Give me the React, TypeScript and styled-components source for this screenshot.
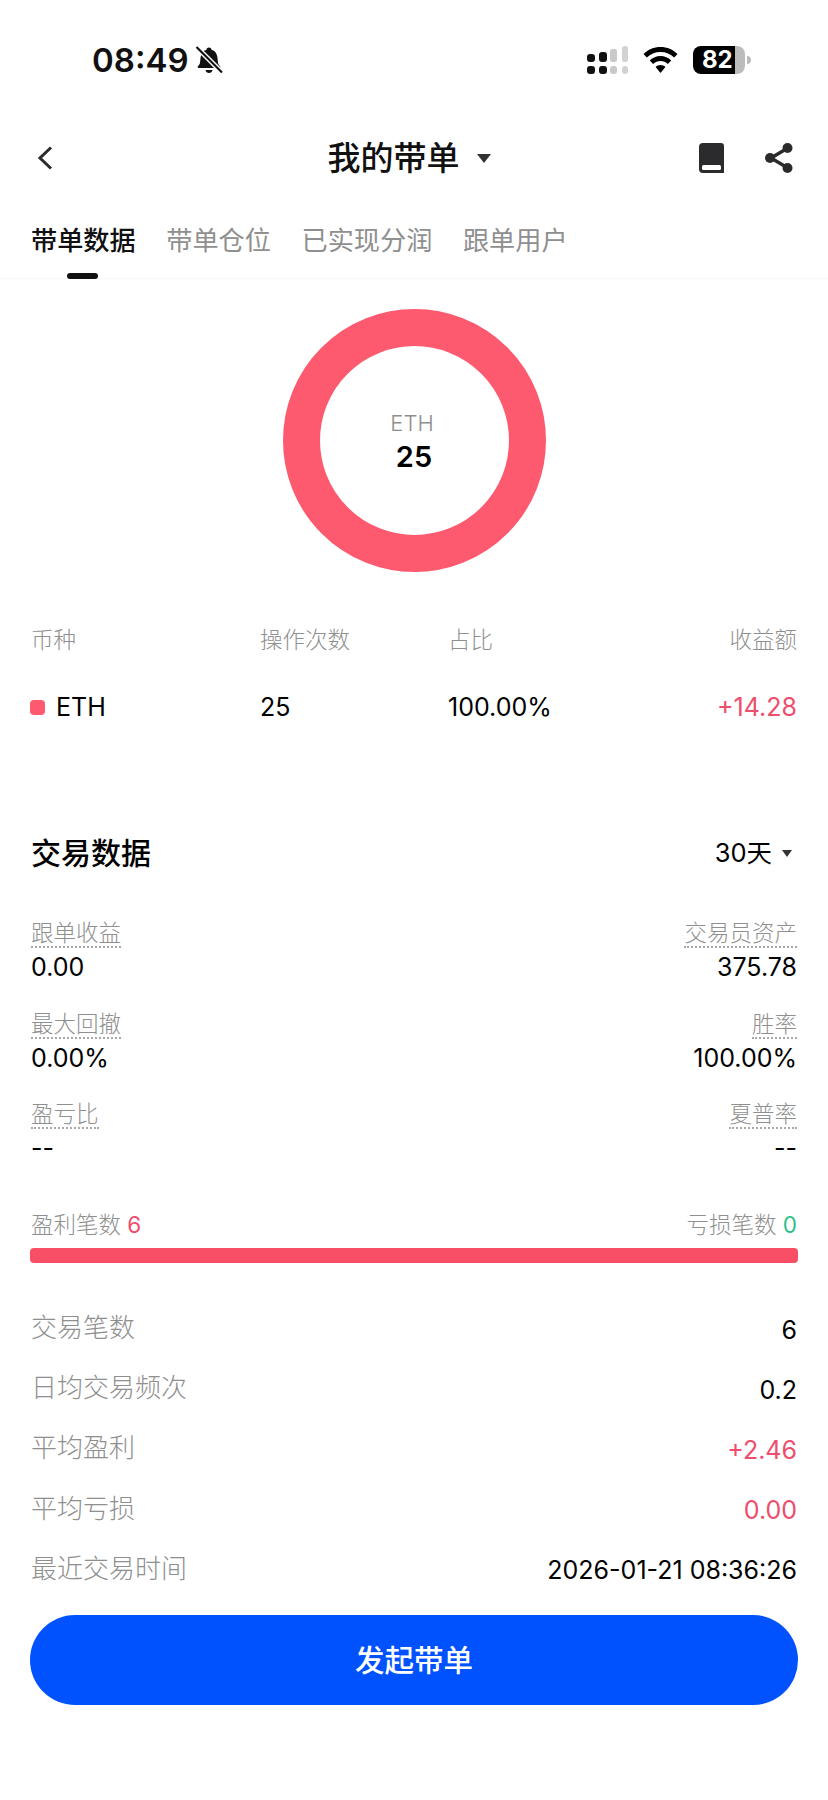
import React from 'react';
import styled, { createGlobalStyle } from 'styled-components';

// -- external datas --
const holdings = { symbol: 'ETH', count: '25', share: '100.00%', income: '+14.28' };

const metrics = [
  { label: '跟单收益', value: '0.00', right: false },
  { label: '交易员资产', value: '375.78', right: true },
  { label: '最大回撤', value: '0.00%', right: false },
  { label: '胜率', value: '100.00%', right: true },
  { label: '盈亏比', value: '--', right: false },
  { label: '夏普率', value: '--', right: true },
];

const details: { label: string; value: string; red?: boolean }[] = [
  { label: '交易笔数', value: '6' },
  { label: '日均交易频次', value: '0.2' },
  { label: '平均盈利', value: '+2.46', red: true },
  { label: '平均亏损', value: '0.00', red: true },
  { label: '最近交易时间', value: '2026-01-21 08:36:26' },
];

const tabs = ['带单数据', '带单仓位', '已实现分润', '跟单用户'];

// -- icons --
const BellOffIcon: React.FC = () => (
  <svg width="28" height="28" viewBox="0 0 28 28">
    <path d="M14 1.5c1.4 0 2.3.9 2.5 2.2 3.6 1 5.5 4 5.9 7.6l.6 5.4c.2 1.4 1 2.4 2 3.4.8.9.3 2-.9 2H3.900c-1.200 0-1.700-1.100-.9-2 1-1 1.800-2 2-3.400l.6-5.400c.4-3.600 2.300-6.600 5.900-7.600.2-1.300 1.100-2.200 2.500-2.200z" fill="#111" />
    <path d="M10.500 24h7c-.3 1.800-1.700 3-3.500 3s-3.200-1.200-3.500-3z" fill="#111" />
    <path d="M2 1.500 26.500 26" stroke="#fff" strokeWidth="5" />
    <path d="M1.500 1 27 26.500" stroke="#111" strokeWidth="2.200" />
  </svg>
);

const SignalIcon: React.FC = () => (
  <svg width="41" height="28" viewBox="0 0 41 28">
    <rect x="0" y="8" width="8" height="8" rx="3" fill="#111" />
    <rect x="12" y="6" width="8" height="10" rx="3" fill="#111" />
    <rect x="23" y="3" width="7" height="13" rx="2.500" fill="#c9c9c9" />
    <rect x="35" y="0" width="6" height="16" rx="2.500" fill="#d2d2d2" />
    <rect x="0" y="20" width="8" height="8" rx="3" fill="#111" />
    <rect x="12" y="20" width="8" height="8" rx="3" fill="#111" />
    <rect x="23" y="20" width="7" height="8" rx="3" fill="#c9c9c9" />
    <rect x="35" y="20" width="6" height="8" rx="3" fill="#d2d2d2" />
  </svg>
);

const WifiIcon: React.FC = () => (
  <svg width="35" height="26" viewBox="0 0 35 26">
    <path d="M17.500 0C24 0 30 2.600 34.500 7l-3.300 3.500C27.600 7 22.800 5 17.500 5S7.400 7 3.800 10.500L.5 7C5 2.600 11 0 17.500 0z" fill="#000" />
    <path d="M17.500 9c4.100 0 7.900 1.600 10.700 4.400l-3.300 3.500c-2-1.900-4.600-3-7.400-3s-5.400 1.100-7.400 3l-3.300-3.500C9.600 10.600 13.400 9 17.500 9z" fill="#000" />
    <path d="M17.500 18c1.900 0 3.600.7 4.900 1.900L17.500 26l-4.900-6.100c1.300-1.200 3-1.900 4.900-1.900z" fill="#000" />
  </svg>
);

const BookIcon: React.FC = () => (
  <svg width="25" height="30" viewBox="0 0 25 30">
    <path d="M4 0h18a3 3 0 0 1 3 3v27H4a4 4 0 0 1-4-4V4a4 4 0 0 1 4-4z" fill="#2b2b2d" />
    <rect x="3" y="22" width="19" height="5" rx="1.500" fill="#fff" />
  </svg>
);

const ShareIcon: React.FC = () => (
  <svg width="28" height="30" viewBox="0 0 28 30">
    <path d="M6 15 22 5.500M6 15l16 9.500" stroke="#2b2b2d" strokeWidth="3.400" fill="none" />
    <circle cx="22.500" cy="5" r="5" fill="#2b2b2d" />
    <circle cx="5" cy="15" r="5" fill="#2b2b2d" />
    <circle cx="22.500" cy="25" r="5" fill="#2b2b2d" />
  </svg>
);

const BackIcon: React.FC = () => (
  <svg width="16" height="24" viewBox="0 0 16 24">
    <path d="M14 1.500 3 12l11 10.500" stroke="#2b2b2d" strokeWidth="3" fill="none" />
  </svg>
);

// -- main component --
const App: React.FC = () => {
  // -- render part --
  return (
    <Page>
      <GlobalStyle />
      <StatusBar>
        <StatusTime>
          <Clock>08:49</Clock>
          <BellOffIcon />
        </StatusTime>
        <StatusIcons>
          <SignalIcon />
          <WifiIcon />
          <Battery>
            <BatteryBody>
              <BatteryLevel>82</BatteryLevel>
            </BatteryBody>
            <BatteryNub />
          </Battery>
        </StatusIcons>
      </StatusBar>

      <NavBar>
        <BackIcon />
        <NavTitle>
          我的带单
          <Caret $size={7.5} $color="#333" />
        </NavTitle>
        <NavActions>
          <BookIcon />
          <ShareIcon />
        </NavActions>
      </NavBar>

      <TabBar>
        {tabs.map((tab, i) => (
          <Tab key={tab} $active={i === 0}>
            {tab}
          </Tab>
        ))}
      </TabBar>

      <Content>
        <Donut>
          <DonutLabel>ETH</DonutLabel>
          <DonutValue>25</DonutValue>
        </Donut>

        <CoinHead>
          <HeadCell>币种</HeadCell>
          <HeadCell>操作次数</HeadCell>
          <HeadCell>占比</HeadCell>
          <HeadCell $right>收益额</HeadCell>
        </CoinHead>
        <CoinRow>
          <CoinCell>
            <CoinDot />
            {holdings.symbol}
          </CoinCell>
          <CoinCell>{holdings.count}</CoinCell>
          <CoinCell>{holdings.share}</CoinCell>
          <CoinCell $right $red>
            {holdings.income}
          </CoinCell>
        </CoinRow>

        <SectionHead>
          <SectionTitle>交易数据</SectionTitle>
          <RangePicker>
            30天
            <Caret $size={5.5} $color="#333" />
          </RangePicker>
        </SectionHead>

        <MetricGrid>
          {metrics.map((m) => (
            <Metric key={m.label} $right={m.right}>
              <MetricLabel>{m.label}</MetricLabel>
              <MetricValue>{m.value}</MetricValue>
            </Metric>
          ))}
        </MetricGrid>

        <CountRow>
          <span>
            盈利笔数 <CountRed>6</CountRed>
          </span>
          <span>
            亏损笔数 <CountGreen>0</CountGreen>
          </span>
        </CountRow>
        <RatioBar />

        <DetailList>
          {details.map((d) => (
            <DetailRow key={d.label}>
              <DetailLabel>{d.label}</DetailLabel>
              <DetailValue $red={d.red}>{d.value}</DetailValue>
            </DetailRow>
          ))}
        </DetailList>

        <PrimaryButton>发起带单</PrimaryButton>
      </Content>
    </Page>
  );
};

// -- styled components --
const GlobalStyle = createGlobalStyle`
  html, body {
    margin: 0;
    padding: 0;
    background: #fff;
  }
  * {
    box-sizing: border-box;
  }
`;

const Page = styled.div`
  width: 828px;
  height: 1800px;
  overflow: hidden;
  background: #fff;
  color: #000;
  font-family: Inter, 'Noto Sans CJK SC', sans-serif;
`;

const StatusBar = styled.div`
  height: 120px;
  padding: 0 77px 0 92px;
  display: flex;
  align-items: center;
  justify-content: space-between;
`;

const StatusTime = styled.div`
  display: flex;
  align-items: center;
  gap: 6px;
`;

const Clock = styled.span`
  font-size: 33px;
  font-weight: 600;
  line-height: 40px;
  color: #111;
`;

const StatusIcons = styled.div`
  display: flex;
  align-items: center;
  gap: 15px;
`;

const Battery = styled.div`
  display: flex;
  align-items: center;
  gap: 2px;
`;

const BatteryBody = styled.div`
  width: 52px;
  height: 28px;
  border-radius: 8px;
  background: linear-gradient(to right, #000 81%, #bcbcbc 81%);
  display: flex;
  align-items: center;
  padding-left: 9px;
`;

const BatteryLevel = styled.span`
  color: #fff;
  font-size: 24px;
  font-weight: 700;
  line-height: 28px;
`;

const BatteryNub = styled.div`
  width: 4px;
  height: 8px;
  border-radius: 0 4px 4px 0;
  background: #bcbcbc;
`;

const NavBar = styled.div`
  height: 76px;
  padding: 0 35px 0 37px;
  display: flex;
  align-items: center;
  justify-content: space-between;
`;

const NavTitle = styled.div`
  display: flex;
  align-items: center;
  gap: 17px;
  font-size: 33px;
  font-weight: 500;
  line-height: 44px;
  color: #111;
  margin-left: 66px;
`;

const Caret = styled.span<{ $size: number; $color: string }>`
  display: inline-block;
  width: 0;
  height: 0;
  border-left: ${(p) => p.$size}px solid transparent;
  border-right: ${(p) => p.$size}px solid transparent;
  border-top: ${(p) => p.$size + 2}px solid ${(p) => p.$color};
`;

const NavActions = styled.div`
  display: flex;
  align-items: center;
  gap: 41px;
`;

const TabBar = styled.div`
  height: 83px;
  padding: 0 31px;
  display: flex;
  gap: 30.5px;
  border-bottom: 1px solid #f6f6f6;
`;

const Tab = styled.div<{ $active: boolean }>`
  position: relative;
  height: 83px;
  padding-top: 27px;
  font-size: 26.2px;
  line-height: 36px;
  color: ${(p) => (p.$active ? '#111' : '#8f8f8f')};
  font-weight: ${(p) => (p.$active ? 500 : 400)};

  ${(p) =>
    p.$active &&
    `
    &::after {
      content: '';
      position: absolute;
      left: 36px;
      bottom: 0;
      width: 31px;
      height: 6px;
      border-radius: 3px;
      background: #111;
    }
  `}
`;

const Content = styled.div`
  padding: 0 31px;
`;

const Donut = styled.div`
  width: 263px;
  height: 263px;
  margin: 30px auto 0;
  border: 37.5px solid #fd5a70;
  border-radius: 50%;
  display: flex;
  flex-direction: column;
  align-items: center;
  justify-content: center;
`;

const DonutLabel = styled.div`
  font-size: 22px;
  font-weight: 300;
  line-height: 26px;
  color: #8e8e8e;
  margin: 4px 4px 0 0;
`;

const DonutValue = styled.div`
  font-size: 29px;
  font-weight: 600;
  line-height: 36px;
  margin-top: 3px;
  color: #000;
`;

const CoinHead = styled.div`
  margin-top: 53px;
  display: grid;
  grid-template-columns: 229px 188px 1fr 1fr;
`;

const HeadCell = styled.div<{ $right?: boolean }>`
  font-size: 22.5px;
  font-weight: 300;
  line-height: 30px;
  color: #8f8f8f;
  text-align: ${(p) => (p.$right ? 'right' : 'left')};
`;

const CoinRow = styled(CoinHead)`
  margin-top: 37px;
`;

const CoinCell = styled.div<{ $right?: boolean; $red?: boolean }>`
  display: flex;
  align-items: center;
  justify-content: ${(p) => (p.$right ? 'flex-end' : 'flex-start')};
  font-size: 25px;
  line-height: 30px;
  color: ${(p) => (p.$red ? '#ee4d6c' : '#000')};
`;

const CoinDot = styled.span`
  width: 15px;
  height: 15px;
  border-radius: 4px;
  background: #fd5a70;
  margin: 0 11px 0 -1px;
`;

const SectionHead = styled.div`
  margin-top: 111px;
  height: 40px;
  display: flex;
  align-items: center;
  justify-content: space-between;
`;

const SectionTitle = styled.div`
  font-size: 30px;
  font-weight: 500;
  line-height: 40px;
  color: #000;
`;

const RangePicker = styled.div`
  display: flex;
  align-items: center;
  gap: 10px;
  font-size: 25.5px;
  line-height: 36px;
  padding-right: 5px;
`;

const MetricGrid = styled.div`
  margin-top: 47px;
  display: grid;
  grid-template-columns: 1fr 1fr;
  row-gap: 28.5px;
`;

const Metric = styled.div<{ $right: boolean }>`
  display: flex;
  flex-direction: column;
  align-items: ${(p) => (p.$right ? 'flex-end' : 'flex-start')};
`;

const MetricLabel = styled.div`
  height: 28px;
  font-size: 22.5px;
  font-weight: 300;
  line-height: 26px;
  color: #8f8f8f;
  border-bottom: 2px dotted #a8a8a8;
`;

const MetricValue = styled.div`
  margin-top: 4px;
  font-size: 25px;
  line-height: 30px;
  color: #000;
`;

const CountRow = styled.div`
  margin-top: 47px;
  display: flex;
  justify-content: space-between;
  font-size: 22.5px;
  font-weight: 300;
  line-height: 30px;
  color: #8f8f8f;
`;

const CountRed = styled.span`
  color: #ee4d6c;
  font-weight: 400;
`;

const CountGreen = styled.span`
  color: #2fbf8a;
  font-weight: 400;
`;

const RatioBar = styled.div`
  margin: 8px -1px 0;
  height: 15px;
  border-radius: 4px;
  background: #f94f66;
`;

const DetailList = styled.div`
  margin-top: 35px;
`;

const DetailRow = styled.div`
  height: 60.2px;
  display: flex;
  align-items: center;
  justify-content: space-between;
`;

const DetailLabel = styled.div`
  font-size: 26px;
  font-weight: 300;
  line-height: 36px;
  color: #8f8f8f;
`;

const DetailValue = styled.div<{ $red?: boolean }>`
  padding-top: 3px;
  font-size: 25px;
  line-height: 30px;
  color: ${(p) => (p.$red ? '#ee4d6c' : '#000')};
`;

const PrimaryButton = styled.button`
  display: block;
  width: calc(100% + 2px);
  height: 90px;
  margin: 16px -1px 0;
  padding: 0 0 4px;
  border: none;
  border-radius: 45px;
  background: #0052ff;
  color: #fff;
  font-family: inherit;
  font-size: 29.5px;
  font-weight: 500;
`;

// -- finally export part --
export default App;
